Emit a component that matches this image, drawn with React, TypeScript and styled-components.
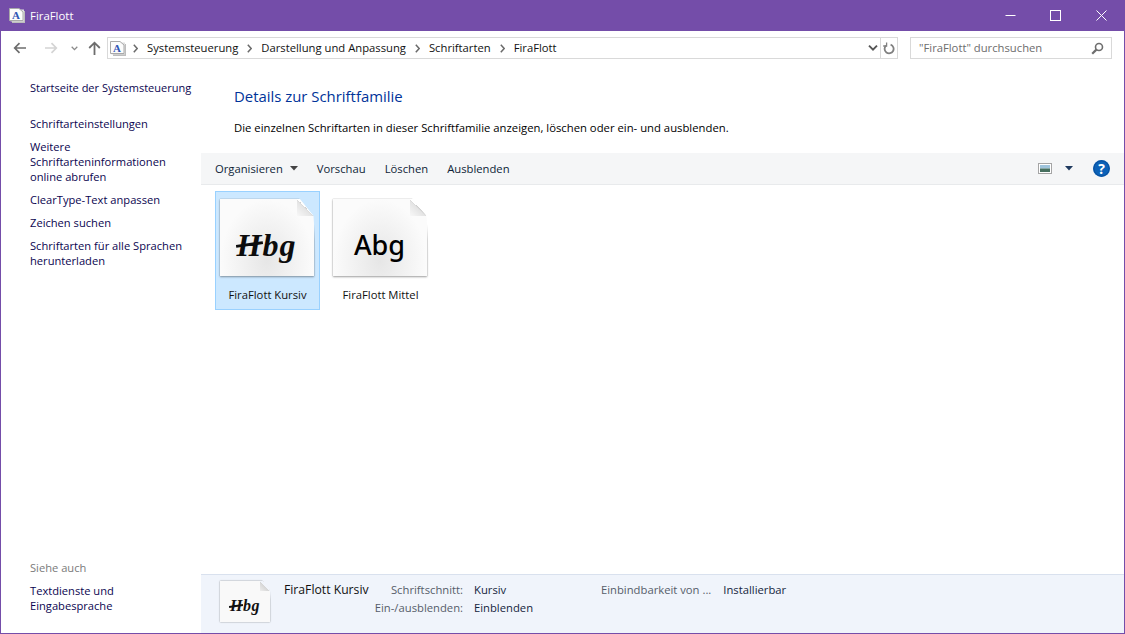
import { createGlobalStyle, styled } from "styled-components";

const GlobalStyle = createGlobalStyle`
  html, body {
    margin: 0;
    padding: 0;
    background: #fff;
  }
  * {
    box-sizing: border-box;
  }
`;

const uiFont = `"Open Sans", "Noto Sans", sans-serif`;

const sideLinks = [
  "Schriftarteinstellungen",
  "Weitere Schriftarteninformationen online abrufen",
  "ClearType-Text anpassen",
  "Zeichen suchen",
  "Schriftarten für alle Sprachen herunterladen",
];

const FontIcon = () => (
  <svg width="16" height="15" viewBox="0 0 16 15">
    <path d="M3 3H16V15H3Z" fill="#bdbdbd" />
    <path d="M1.5 1.5H15V13.5H1.5Z" fill="#dedede" />
    <path d="M.5.5H10L14 4V12.5H.5Z" fill="#fbfbfb" stroke="#a9a9a9" />
    <text x="7" y="11" textAnchor="middle" fontFamily="Liberation Serif, serif" fontWeight="700" fontSize="11" fill="#2f55b5">
      A
    </text>
  </svg>
);

const ArrowLeft = ({ color }: { color: string }) => (
  <svg width="14" height="12" viewBox="0 0 14 12" fill="none" stroke={color} strokeWidth="1.7">
    <path d="M13 6H2M6.5 1.2 1.7 6l4.8 4.8" />
  </svg>
);

const ArrowRight = ({ color }: { color: string }) => (
  <svg width="14" height="12" viewBox="0 0 14 12" fill="none" stroke={color} strokeWidth="1.7">
    <path d="M1 6h11M7.5 1.2 12.3 6l-4.8 4.8" />
  </svg>
);

const ArrowUp = () => (
  <svg width="13" height="14" viewBox="0 0 13 14" fill="none" stroke="#6d6d6d" strokeWidth="1.8">
    <path d="M6.5 14V2M1.2 7 6.5 1.7 11.8 7" />
  </svg>
);

const Chevron = ({ color, size = 7 }: { color: string; size?: number }) => (
  <svg width={size} height={size - 2} viewBox="0 0 7 5" fill="none" stroke={color} strokeWidth="1.3">
    <path d="M.7.8 3.5 3.6 6.3.8" />
  </svg>
);

const Crumb = () => (
  <svg width="5" height="9" viewBox="0 0 5 9" fill="none" stroke="#6a6a6a" strokeWidth="1.5">
    <path d="M.8.8 4.2 4.5.8 8.2" />
  </svg>
);

const Refresh = () => (
  <svg width="12" height="13" viewBox="0 0 12 13" fill="none" stroke="#808080" strokeWidth="1.8">
    <path d="M7.6 2.6A4.5 4.5 0 1 1 3 3.6" />
    <path d="M3.6 .4v3.6H.2" strokeWidth="1.3" />
  </svg>
);

const Magnifier = () => (
  <svg width="13" height="13" viewBox="0 0 13 13" fill="none" stroke="#6e6e6e">
    <circle cx="8" cy="5" r="3.5" strokeWidth="1.6" />
    <path d="M5.4 7.6 1.2 11.8" strokeWidth="2.2" />
  </svg>
);

const Caret = ({ color }: { color: string }) => (
  <svg width="8" height="5" viewBox="0 0 8 5">
    <path d="M0 0h8L4 4.5Z" fill={color} />
  </svg>
);

const ViewIcon = () => (
  <svg width="14" height="11" viewBox="0 0 14 11">
    <rect x=".5" y=".5" width="13" height="10" fill="#fff" stroke="#a5a5a5" />
    <rect x="2" y="2" width="10" height="3.5" fill="#9fc4dc" />
    <rect x="2" y="5.5" width="10" height="3.5" fill="#47705f" />
  </svg>
);

const Help = () => (
  <svg width="17" height="17" viewBox="0 0 17 17">
    <circle cx="8.5" cy="8.5" r="8.5" fill="#0c62b8" />
    <circle cx="8.5" cy="8.5" r="7.6" fill="none" stroke="#0a4f9c" />
  </svg>
);

const App = () => {
  return (
    <>
      <GlobalStyle />
      <Window>
        <TitleBar>
          <TitleLeft>
            <FontIcon />
            <span>FiraFlott</span>
          </TitleLeft>
          <WindowButtons>
            <WindowButton>
              <svg width="11" height="11" viewBox="0 0 11 11" stroke="#fff" fill="none">
                <path d="M.5 5.5h10" />
              </svg>
            </WindowButton>
            <WindowButton>
              <svg width="11" height="11" viewBox="0 0 11 11" stroke="#fff" fill="none">
                <rect x=".5" y=".5" width="10" height="10" />
              </svg>
            </WindowButton>
            <WindowButton>
              <svg width="11" height="11" viewBox="0 0 11 11" stroke="#fff" fill="none">
                <path d="M.5.5l10 10M10.5.5l-10 10" />
              </svg>
            </WindowButton>
          </WindowButtons>
        </TitleBar>
        <NavRow>
          <NavButtons>
            <ArrowLeft color="#6d6d6d" />
            <ForwardSlot>
              <ArrowRight color="#d4d4d4" />
            </ForwardSlot>
            <HistorySlot>
              <Chevron color="#8a8a8a" />
            </HistorySlot>
            <ArrowUp />
          </NavButtons>
          <AddressBar>
            <AddressIcon>
              <FontIcon />
            </AddressIcon>
            <Crumb />
            <CrumbText>Systemsteuerung</CrumbText>
            <Crumb />
            <CrumbText>Darstellung und Anpassung</CrumbText>
            <Crumb />
            <CrumbText>Schriftarten</CrumbText>
            <Crumb />
            <CrumbText>FiraFlott</CrumbText>
            <AddressEnd>
              <Chevron color="#555" size={10} />
              <RefreshBox>
                <Refresh />
              </RefreshBox>
            </AddressEnd>
          </AddressBar>
          <SearchBox>
            <SearchHint>"FiraFlott" durchsuchen</SearchHint>
            <Magnifier />
          </SearchBox>
        </NavRow>
        <Body>
          <Sidebar>
            <SideHome>Startseite der Systemsteuerung</SideHome>
            <SideList>
              {sideLinks.map((link) => (
                <SideLink key={link}>{link}</SideLink>
              ))}
            </SideList>
            <SeeAlso>
              <SeeAlsoLabel>Siehe auch</SeeAlsoLabel>
              <SideLink>Textdienste und Eingabesprache</SideLink>
            </SeeAlso>
          </Sidebar>
          <Main>
            <Intro>
              <Heading>Details zur Schriftfamilie</Heading>
              <Description>
                Die einzelnen Schriftarten in dieser Schriftfamilie anzeigen, löschen oder ein- und ausblenden.
              </Description>
            </Intro>
            <Toolbar>
              <ToolGroup>
                <ToolItem>
                  Organisieren
                  <Caret color="#444" />
                </ToolItem>
                <ToolItem>Vorschau</ToolItem>
                <ToolItem>Löschen</ToolItem>
                <ToolItem>Ausblenden</ToolItem>
              </ToolGroup>
              <ToolRight>
                <ViewIcon />
                <Caret color="#1f3a5f" />
                <HelpWrap>
                  <Help />
                  <HelpMark>?</HelpMark>
                </HelpWrap>
              </ToolRight>
            </Toolbar>
            <FileArea>
              <FontTile $selected>
                <Sheet>
                  <Fold />
                  <ScriptSample>Hbg</ScriptSample>
                </Sheet>
                <TileLabel>FiraFlott Kursiv</TileLabel>
              </FontTile>
              <FontTile>
                <Sheet>
                  <Fold />
                  <MonoSample>Abg</MonoSample>
                </Sheet>
                <TileLabel>FiraFlott Mittel</TileLabel>
              </FontTile>
            </FileArea>
            <Details>
              <SmallSheet>
                <SmallFold />
                <SmallSample>Hbg</SmallSample>
              </SmallSheet>
              <DetailName>FiraFlott Kursiv</DetailName>
              <DetailGrid>
                <DetailKey>Schriftschnitt:</DetailKey>
                <DetailValue>Kursiv</DetailValue>
                <DetailKey>Ein-/ausblenden:</DetailKey>
                <DetailValue>Einblenden</DetailValue>
              </DetailGrid>
              <DetailExtra>
                <DetailKey>Einbindbarkeit von ...</DetailKey>
                <DetailValue>Installierbar</DetailValue>
              </DetailExtra>
            </Details>
          </Main>
        </Body>
      </Window>
    </>
  );
};

const Window = styled.div`
  width: 1125px;
  height: 634px;
  display: flex;
  flex-direction: column;
  overflow: hidden;
  background: #fff;
  border: 1px solid #744da9;
  border-top: 0;
  font-family: ${uiFont};
  font-size: 11.25px;
  color: #000;
`;

const TitleBar = styled.div`
  height: 31px;
  flex: none;
  margin: 0 -1px;
  display: flex;
  align-items: center;
  justify-content: space-between;
  background: #744da9;
  color: #fff;
`;

const TitleLeft = styled.div`
  display: flex;
  align-items: center;
  gap: 5px;
  padding-left: 9px;
  font-size: 11.4px;
`;

const WindowButtons = styled.div`
  display: flex;
  padding-right: 1px;
`;

const WindowButton = styled.div`
  width: 45.5px;
  height: 31px;
  display: flex;
  align-items: center;
  justify-content: center;
`;

const NavRow = styled.div`
  height: 34px;
  flex: none;
  display: flex;
  align-items: center;
`;

const NavButtons = styled.div`
  width: 106px;
  flex: none;
  display: flex;
  align-items: center;
  padding-left: 12px;
`;

const ForwardSlot = styled.div`
  margin-left: 17px;
  display: flex;
`;

const HistorySlot = styled.div`
  margin: 0 10px 0 13px;
  display: flex;
`;

const AddressBar = styled.div`
  width: 791px;
  height: 22px;
  flex: none;
  display: flex;
  align-items: center;
  border: 1px solid #d9d9d9;
  color: #111;
`;

const AddressIcon = styled.div`
  width: 25px;
  padding-left: 2px;
  display: flex;
`;

const CrumbText = styled.span`
  margin: -2px 9px 0;
`;

const AddressEnd = styled.div`
  margin-left: auto;
  height: 100%;
  display: flex;
  align-items: center;
  gap: 2px;
`;

const RefreshBox = styled.div`
  width: 17px;
  height: 100%;
  display: flex;
  align-items: center;
  justify-content: center;
  border-left: 1px solid #d9d9d9;
`;

const SearchBox = styled.div`
  width: 202px;
  height: 22px;
  margin-left: 12px;
  padding: 0 7px 0 8px;
  flex: none;
  display: flex;
  align-items: center;
  justify-content: space-between;
  border: 1px solid #d9d9d9;
  color: #6d6d6d;
`;

const SearchHint = styled.span`
  margin-top: -2px;
`;

const Body = styled.div`
  flex: 1;
  min-height: 0;
  display: flex;
`;

const Sidebar = styled.aside`
  width: 200px;
  flex: none;
  display: flex;
  flex-direction: column;
  padding: 15px 0 20px 29px;
  font-size: 11.15px;
  line-height: 15px;
  color: #0b0550;
`;

const SideHome = styled.div`
  margin-bottom: 21px;
  font-size: 11px;
  white-space: nowrap;
`;

const SideList = styled.div`
  display: flex;
  flex-direction: column;
  gap: 8px;
  width: 160px;
`;

const SideLink = styled.div`
  width: 160px;
`;

const SeeAlso = styled.div`
  margin-top: auto;
  display: flex;
  flex-direction: column;
  gap: 8px;
`;

const SeeAlsoLabel = styled.div`
  color: #7a7a7a;
`;

const Main = styled.main`
  flex: 1;
  min-width: 0;
  display: flex;
  flex-direction: column;
`;

const Intro = styled.div`
  height: 88px;
  flex: none;
  padding: 21px 0 0 33px;
`;

const Heading = styled.h1`
  margin: 0;
  font-size: 14.9px;
  line-height: 20px;
  font-weight: 400;
  color: #003399;
`;

const Description = styled.p`
  margin: 14px 0 0;
  font-size: 11.3px;
  line-height: 15px;
  color: #000;
`;

const Toolbar = styled.div`
  height: 32px;
  flex: none;
  display: flex;
  align-items: center;
  justify-content: space-between;
  padding: 0 14px;
  background: #f5f6f7;
  border-bottom: 1px solid #e8eaec;
`;

const ToolGroup = styled.div`
  display: flex;
  align-items: center;
  gap: 19px;
`;

const ToolItem = styled.div`
  display: flex;
  align-items: center;
  gap: 7px;
  color: #0f1f38;
`;

const ToolRight = styled.div`
  display: flex;
  align-items: center;
  gap: 13px;
`;

const HelpWrap = styled.div`
  position: relative;
  width: 17px;
  height: 17px;
  margin-left: 7px;
  display: flex;
`;

const HelpMark = styled.span`
  position: absolute;
  inset: 0;
  text-align: center;
  line-height: 17px;
  font-size: 14px;
  font-weight: 700;
  color: #fff;
`;

const FileArea = styled.div`
  flex: 1;
  min-height: 0;
  display: flex;
  align-items: flex-start;
  gap: 8px;
  padding: 6px 0 0 14px;
`;

const FontTile = styled.div<{ $selected?: boolean }>`
  width: 105px;
  height: 119px;
  display: flex;
  flex-direction: column;
  align-items: center;
  padding-top: 7px;
  border: 1px solid ${(p) => (p.$selected ? "#99d1ff" : "transparent")};
  background: ${(p) => (p.$selected ? "#cce8ff" : "transparent")};
`;

const Sheet = styled.div`
  position: relative;
  width: 94px;
  height: 77px;
  margin-right: 2px;
  display: flex;
  align-items: center;
  justify-content: center;
  padding-top: 14px;
  background: radial-gradient(ellipse at 50% 80%, #e6e6e6 0%, #fbfbfb 70%);
  box-shadow: 0 1px 2px rgba(0, 0, 0, 0.35), 0 0 1px rgba(0, 0, 0, 0.3);
  clip-path: polygon(-4px -4px, 77px -4px, 100% 17px, calc(100% + 4px) calc(100% + 4px), -4px calc(100% + 4px));
`;

const Fold = styled.div`
  position: absolute;
  top: 0;
  right: 0;
  width: 17px;
  height: 17px;
  background: linear-gradient(225deg, #fff 0 50%, #cfcfcf 50%, #e4e4e4 55%, #f8f8f8 100%);
`;

const ScriptSample = styled.span`
  position: relative;
  font-family: "Liberation Serif", serif;
  font-style: italic;
  font-weight: 700;
  font-size: 32px;
  letter-spacing: 1px;
  line-height: 1;
  color: #0c0c0c;

  &::before {
    content: "";
    position: absolute;
    left: -1px;
    top: 14px;
    width: 27px;
    height: 3px;
    background: #0c0c0c;
    transform: rotate(-8deg);
  }
`;

const MonoSample = styled.span`
  font-family: "Noto Sans", sans-serif;
  font-weight: 500;
  font-size: 27px;
  line-height: 1;
  color: #000;
`;

const TileLabel = styled.div`
  margin-top: 11px;
  color: #111;
  white-space: nowrap;
`;

const Details = styled.div`
  height: 59px;
  flex: none;
  display: flex;
  align-items: flex-start;
  padding: 6px 0 0 19px;
  background: #f0f4fb;
  border-top: 1px solid #d9e1ee;
  line-height: 18px;
`;

const SmallSheet = styled.div`
  position: relative;
  width: 50px;
  height: 41px;
  flex: none;
  display: flex;
  align-items: center;
  justify-content: center;
  padding-top: 9px;
  background: #f9f9f9;
  box-shadow: 0 0 1.5px rgba(0, 0, 0, 0.45);
  clip-path: polygon(-4px -4px, 40px -4px, 100% 10px, calc(100% + 4px) calc(100% + 4px), -4px calc(100% + 4px));
`;

const SmallFold = styled.div`
  position: absolute;
  top: 0;
  right: 0;
  width: 10px;
  height: 10px;
  background: linear-gradient(225deg, #f0f4fb 0 50%, #d4d4d4 50%, #eee 100%);
`;

const SmallSample = styled.span`
  position: relative;
  font-family: "Liberation Serif", serif;
  font-style: italic;
  font-weight: 700;
  font-size: 16px;
  letter-spacing: 0.5px;
  line-height: 1;
  color: #111;

  &::before {
    content: "";
    position: absolute;
    left: -1px;
    top: 7px;
    width: 14px;
    height: 2px;
    background: #111;
    transform: rotate(-8deg);
  }
`;

const DetailName = styled.div`
  width: 85px;
  margin-left: 14px;
  font-size: 12.2px;
  white-space: nowrap;
  color: #111;
`;

const DetailGrid = styled.div`
  width: 232px;
  flex: none;
  display: grid;
  grid-template-columns: 94px 1fr;
  column-gap: 11px;
`;

const DetailExtra = styled.div`
  display: flex;
  gap: 12px;
`;

const DetailKey = styled.div`
  text-align: right;
  color: #565d6a;
  white-space: nowrap;
`;

const DetailValue = styled.div`
  color: #14243d;
  white-space: nowrap;
`;

export default App;
